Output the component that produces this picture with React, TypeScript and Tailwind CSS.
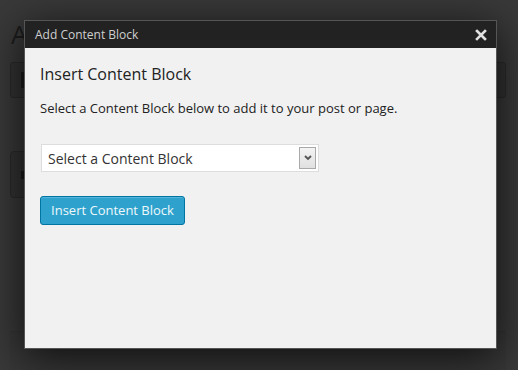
import React from 'react';

const font = { fontFamily: '"Open Sans", "Liberation Sans", sans-serif' };

const CloseIcon = () => (
  <svg width="12" height="12" viewBox="0 0 12 12" className="block">
    <path d="M2 2 L10 10 M10 2 L2 10" stroke="#e0e0e0" strokeWidth="2.6" strokeLinecap="square" />
  </svg>
);

const Chevron = () => (
  <svg width="8" height="6" viewBox="0 0 8 6" className="block">
    <path d="M1 1 L4 4 L7 1" stroke="#555" strokeWidth="1.9" fill="none" />
  </svg>
);

const App = () => {
  return (
    <div className="relative w-[518px] h-[370px] overflow-hidden bg-[#393939]" style={font}>
      {/* dimmed page behind the modal */}
      <div className="flex flex-col pl-[10px] pr-[12px] pt-[18px]">
        <div className="text-[26px] leading-[32px] text-[#1c1c1c] pl-[1px]">A</div>
        <div className="mt-[12px] h-[36px] rounded-[3px] border border-[#2a2a2a] bg-[#333] flex items-center pl-[10px]">
          <span className="w-[3px] h-[16px] bg-[#1c1c1c]" />
        </div>
        <div className="mt-[53px] w-[120px] h-[47px] rounded-[4px] border border-[#2a2a2a] bg-[#333] flex items-center pl-[10px]">
          <span className="w-[6px] h-[8px] bg-[#1a1a1a]" />
        </div>
        <div className="mt-[133px] h-[60px] border-t border-[#333] bg-[#373737]" />
      </div>

      {/* modal */}
      <div className="absolute left-[24px] top-[20px] w-[473px] h-[329px] border border-[#555] bg-[#f1f1f1] shadow-[0_8px_40px_rgba(0,0,0,0.75)] flex flex-col">
        <div className="h-[27px] bg-[#222] flex items-center justify-between pl-[10px] pr-[9px] shrink-0">
          <span className="text-[12px] text-[#cfcfcf]">Add Content Block</span>
          <CloseIcon />
        </div>
        <div className="flex flex-col pl-[15px] pt-[14px]">
          <h2 className="text-[16px] leading-[24px] font-medium text-[#222]">Insert Content Block</h2>
          <p className="mt-[12px] text-[13px] leading-[20px] text-[#222]">
            Select a Content Block below to add it to your post or page.
          </p>
          <div className="mt-[26px] ml-[1px] w-[278px] h-[28px] border border-[#ddd] bg-white flex items-center justify-between pl-[6px] pr-[2px]">
            <span className="text-[14px] text-[#333]">Select a Content Block</span>
            <span className="w-[17px] h-[22px] border border-[#a9a9a9] bg-gradient-to-b from-[#f4f4f4] to-[#e0e0e0] flex items-center justify-center">
              <Chevron />
            </span>
          </div>
          <button className="mt-[24px] w-[145px] h-[29px] rounded-[3px] border border-[#0074a2] bg-[#2ea2cc] shadow-[inset_0_1px_0_rgba(120,200,230,0.5)] text-[13px] text-[#eef8fc] flex items-center justify-center">
            Insert Content Block
          </button>
        </div>
      </div>
    </div>
  );
};

export default App;
